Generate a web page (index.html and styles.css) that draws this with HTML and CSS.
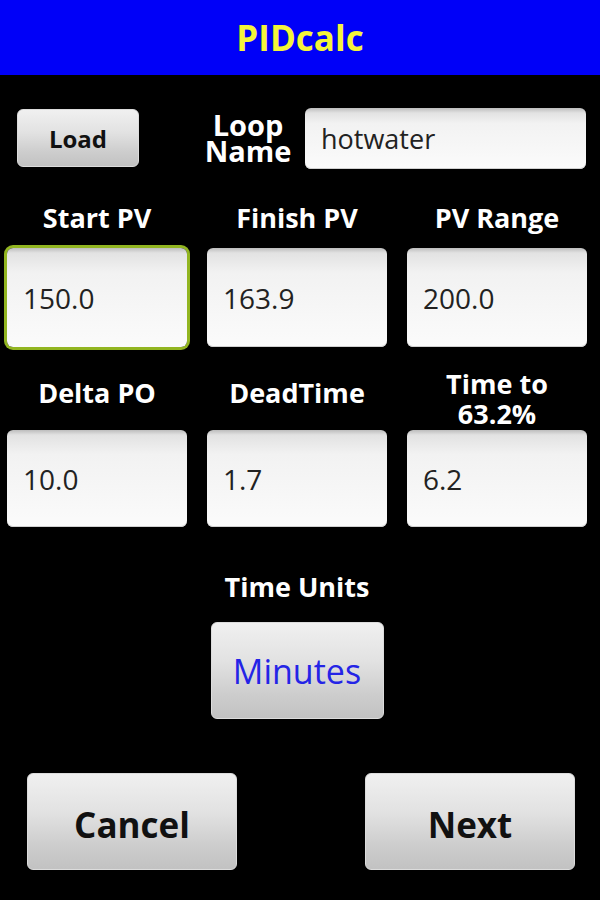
FILE: index.html
```html
<!DOCTYPE html>
<html lang="en">
<head>
  <meta charset="UTF-8">
  <meta name="viewport" content="width=device-width, initial-scale=1.0">
  <title>PIDcalc</title>
  <link rel="stylesheet" href="styles.css">
</head>
<body>
  <div class="title-bar">PIDcalc</div>

  <div class="loop-row">
    <button class="btn btn-load">Load</button>
    <label class="loop-label" for="loopName">Loop<br>Name</label>
    <input type="text" class="field field-name" id="loopName" value="hotwater">
  </div>

  <div class="param-grid">
    <label class="param-label">Start PV</label>
    <label class="param-label">Finish PV</label>
    <label class="param-label">PV Range</label>
    <input type="text" class="field field-focus" value="150.0">
    <input type="text" class="field" value="163.9">
    <input type="text" class="field" value="200.0">

    <label class="param-label second">Delta PO</label>
    <label class="param-label second">DeadTime</label>
    <label class="param-label second two-line">Time to<br>63.2%</label>
    <input type="text" class="field" value="10.0">
    <input type="text" class="field" value="1.7">
    <input type="text" class="field" value="6.2">
  </div>

  <div class="units">
    <div class="units-label">Time Units</div>
    <button class="btn btn-units">Minutes</button>
  </div>

  <div class="actions">
    <button class="btn btn-big">Cancel</button>
    <button class="btn btn-big">Next</button>
  </div>
</body>
</html>
```

FILE: styles.css
```css
body {
  font-family: "Open Sans", "DejaVu Sans", sans-serif;
  margin: 0;
  background-color: #000;
  color: #fff;
  width: 600px;
  height: 900px;
  overflow: hidden;
}

.title-bar {
  height: 75px;
  background-color: #0000f8;
  color: #f4f43a;
  font-size: 35px;
  font-weight: bold;
  line-height: 75px;
  text-align: center;
}

.btn {
  font-family: inherit;
  color: #111;
  font-weight: bold;
  background: linear-gradient(to bottom, #f0f0f0 0%, #e2e2e2 40%, #cdcdcd 75%, #c2c2c2 100%);
  border: 1px solid #dcdcdc;
  border-radius: 6px;
  padding: 0;
  cursor: pointer;
}

.loop-row {
  display: flex;
  align-items: center;
  margin-top: 32px;
  height: 62px;
  padding-left: 17px;
  padding-right: 14px;
}

.btn-load {
  width: 122px;
  height: 58px;
  font-size: 24px;
}

.loop-label {
  flex: 1;
  text-align: center;
  font-size: 29px;
  font-weight: bold;
  line-height: 26px;
  padding-left: 52px;
}

.field {
  box-sizing: border-box;
  font-family: inherit;
  font-size: 28px;
  color: #222;
  border: none;
  border-radius: 6px;
  background: linear-gradient(to bottom, #bdbdbd 0px, #e2e2e2 5px, #f2f2f2 25%, #fbfbfb 100%);
  box-shadow: inset 0 -1px 0 #d0d0d0;
  padding: 0 16px;
  outline: none;
  width: 100%;
}

.field-name {
  width: 281px;
  height: 61px;
  font-size: 27px;
}

.field-focus {
  box-shadow: 0 0 0 3px #92b521;
}

.param-grid {
  display: grid;
  grid-template-columns: 180px 180px 180px;
  grid-template-rows: 62px 99px 83px 97px;
  column-gap: 20px;
  margin-top: 17px;
  padding-left: 7px;
}

.param-grid .field {
  height: 100%;
}

.param-label {
  display: flex;
  align-items: center;
  justify-content: center;
  text-align: center;
  font-size: 27px;
  font-weight: bold;
  line-height: 31px;
}

.param-label.second {
  padding-top: 21px;
  padding-bottom: 14px;
}

.param-label.two-line {
  line-height: 30px;
  padding-bottom: 0;
}

.units {
  display: flex;
  flex-direction: column;
  align-items: center;
  margin-top: 44px;
  padding-right: 6px;
}

.units-label {
  font-size: 27px;
  font-weight: bold;
  line-height: 31px;
}

.btn-units {
  margin-top: 20px;
  width: 173px;
  height: 97px;
  font-size: 34px;
  font-weight: normal;
  color: #2424e6;
}

.actions {
  display: flex;
  justify-content: space-between;
  margin-top: 54px;
  padding: 0 25px 0 27px;
}

.btn-big {
  width: 210px;
  height: 97px;
  font-size: 35px;
  padding-top: 6px;
}
```
